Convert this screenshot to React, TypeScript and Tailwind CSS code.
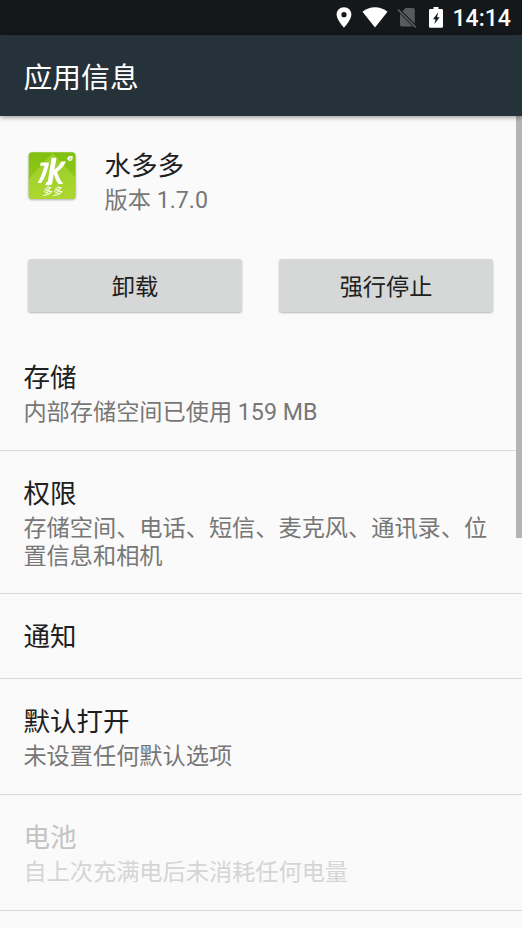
type Row = { title: string; summary?: string; height: string; disabled?: boolean };

const rows: Row[] = [
  { title: '存储', summary: '内部存储空间已使用 159 MB', height: 'h-[116px]' },
  { title: '权限', summary: '存储空间、电话、短信、麦克风、通讯录、位置信息和相机', height: 'h-[143px]' },
  { title: '通知', height: 'h-[85px]' },
  { title: '默认打开', summary: '未设置任何默认选项', height: 'h-[116px]' },
  { title: '电池', summary: '自上次充满电后未消耗任何电量', height: 'h-[116px]', disabled: true },
];

function StatusBar() {
  return (
    <div className="flex h-[35px] shrink-0 items-center justify-end bg-[#14181b] pr-[11.500px] text-white">
      <svg className="mr-[10px] h-[21px] w-[16px]" viewBox="0 0 16 21">
        <path fill="#fff" fillRule="evenodd" d="M8 .3C3.8.3.6 3.5.6 7.6.6 13 8 20.7 8 20.7s7.4-7.7 7.4-13.1C15.400 3.500 12.200.3 8 .3Zm0 4.800a2.600 2.600 0 1 1 0 5.200 2.600 2.600 0 0 1 0-5.200Z" />
      </svg>
      <svg className="mr-[9px] h-[21px] w-[26px]" viewBox="0 0 26 21">
        <path fill="#fff" d="M.5 4.700C4 1.900 8.300.3 13 .3s9 1.600 12.500 4.400L13 20.500Z" />
      </svg>
      <svg className="mr-[12px] h-[21px] w-[20px]" viewBox="0 0 20 21">
        <path fill="#585b5d" d="M8.500 1H16q1.800 0 1.800 1.800v14L5.300 4.300ZM3 6.700 15.600 19.500H4.800Q3 19.500 3 17.700Z" />
        <path stroke="#585b5d" strokeWidth="1.700" d="m1 2.600 17.800 17.700" />
      </svg>
      <svg className="mr-[10px] h-[21px] w-[14px]" viewBox="0 0 14 21">
        <path fill="#fff" fillRule="evenodd" d="M4.500 0h5v2H12.700Q14 2 14 3.300V19.500Q14 20.800 12.700 20.800H1.300Q0 20.800 0 19.500V3.300Q0 2 1.300 2H4.500ZM9.200 5.200 4 12.200H6.600L5.300 17.300 10.600 10.300H8Z" />
      </svg>
      <span className="w-[58px] whitespace-nowrap pt-[2px] font-['Roboto',sans-serif] text-[23px] leading-[34px] font-medium">14:14</span>
    </div>
  );
}

function AppLogo() {
  return (
    <svg className="h-[48px] w-[48px] shrink-0 drop-shadow-[0_1px_1px_rgba(0,0,0,0.3)]" viewBox="0 0 48 48">
      <defs>
        <linearGradient id="leaf" x1="0" y1="0" x2="0" y2="1">
          <stop offset="0" stopColor="#80c010" />
          <stop offset="1" stopColor="#9fce1a" />
        </linearGradient>
      </defs>
      <rect x=".7" y=".3" width="46.800" height="46.700" rx="3.500" fill="url(#leaf)" />
      <path d="M24.500 1 47.500 26V43.500q0 3.500-3.500 3.500H4.200Q.7 47 .7 43.500V27Z" fill="#c5e65a" opacity=".36" />
      <g fill="#fff">
        <path d="M12.800 10.500h8.200l-.6 3.500C18.600 21 16.500 26.500 13 31H9.600C12.600 26 15 20 16.400 13.800H12Z" />
        <path d="M23.600 5.700h4.900l-4.200 25q-.5 2.600-3 2.600H17.400l1-3.300h1.300Z" />
        <path d="M33.200 9.500H38c-2.300 4.700-5.200 8-8.800 10.200 1.400 4.700 3 8.700 6 12.300h-4.700C27.400 28 25.800 23 25.300 18.200 28.900 16.200 31.400 13.400 33.200 9.500Z" />
        <path d="M44.600 3.700v3q-.6 2.200-2.900 2.200-2.300-.1-2.300-2.300 0-2.900 5.200-2.900Z" />
      </g>
      <path d="M41 7.600 43.300 5.500" stroke="#78b80c" strokeWidth=".9" fill="none" />
      <text transform="translate(14.300 43) skewX(-8)" fill="#fff" fontFamily="'Noto Sans CJK SC', sans-serif" fontSize="10.200" fontWeight="500">多多</text>
    </svg>
  );
}

function ActionButton({ label }: { label: string }) {
  return (
    <button className="flex h-[53px] w-[214px] items-center justify-center rounded-[3px] bg-[#d6d7d7] pt-[2px] text-[23.200px] leading-[28px] text-[#202020] shadow-[0_1px_2px_rgba(0,0,0,0.28)]">
      {label}
    </button>
  );
}

function PreferenceRow({ title, summary, height, disabled }: Row) {
  return (
    <div className={`${height} shrink-0 border-b border-[#d8d8d8] pt-[25px] pr-[26px] pl-[23.400px]`}>
      <div className={`text-[26.500px] leading-[36px] ${disabled ? 'text-[#c3c3c3]' : 'text-[#202020]'}`}>{title}</div>
      {summary && (
        <div className={`mt-[3px] text-[23.200px] leading-[27.500px] ${disabled ? 'text-[#d5d5d5]' : 'text-[#777777]'}`}>{summary}</div>
      )}
    </div>
  );
}

export default function App() {
  return (
    <div className="relative flex h-[928px] w-[522px] flex-col overflow-hidden bg-[#fafafa] font-['Roboto','Noto_Sans_CJK_SC',sans-serif]">
      <StatusBar />
      <header className="z-10 flex h-[81px] shrink-0 items-center bg-[#263239] pt-[4px] pl-[23.500px] text-[28.800px] leading-[40px] text-white shadow-[0_1px_5px_rgba(0,0,0,0.45)]">
        应用信息
      </header>
      <section className="flex h-[143px] shrink-0 pt-[36px] pl-[28px]">
        <AppLogo />
        <div className="ml-[28.500px] -mt-[4px]">
          <div className="text-[26.500px] leading-[36px] text-[#202020]">水多多</div>
          <div className="text-[23.200px] leading-[32px] text-[#777777]">版本 1.7.0</div>
        </div>
      </section>
      <div className="flex h-[76px] shrink-0 gap-[37px] pl-[28px]">
        <ActionButton label="卸载" />
        <ActionButton label="强行停止" />
      </div>
      {rows.map((row) => (
        <PreferenceRow key={row.title} {...row} />
      ))}
      <div className="absolute top-[116px] right-0 h-[422px] w-[6px] bg-[#b4b4b4]" />
    </div>
  );
}
